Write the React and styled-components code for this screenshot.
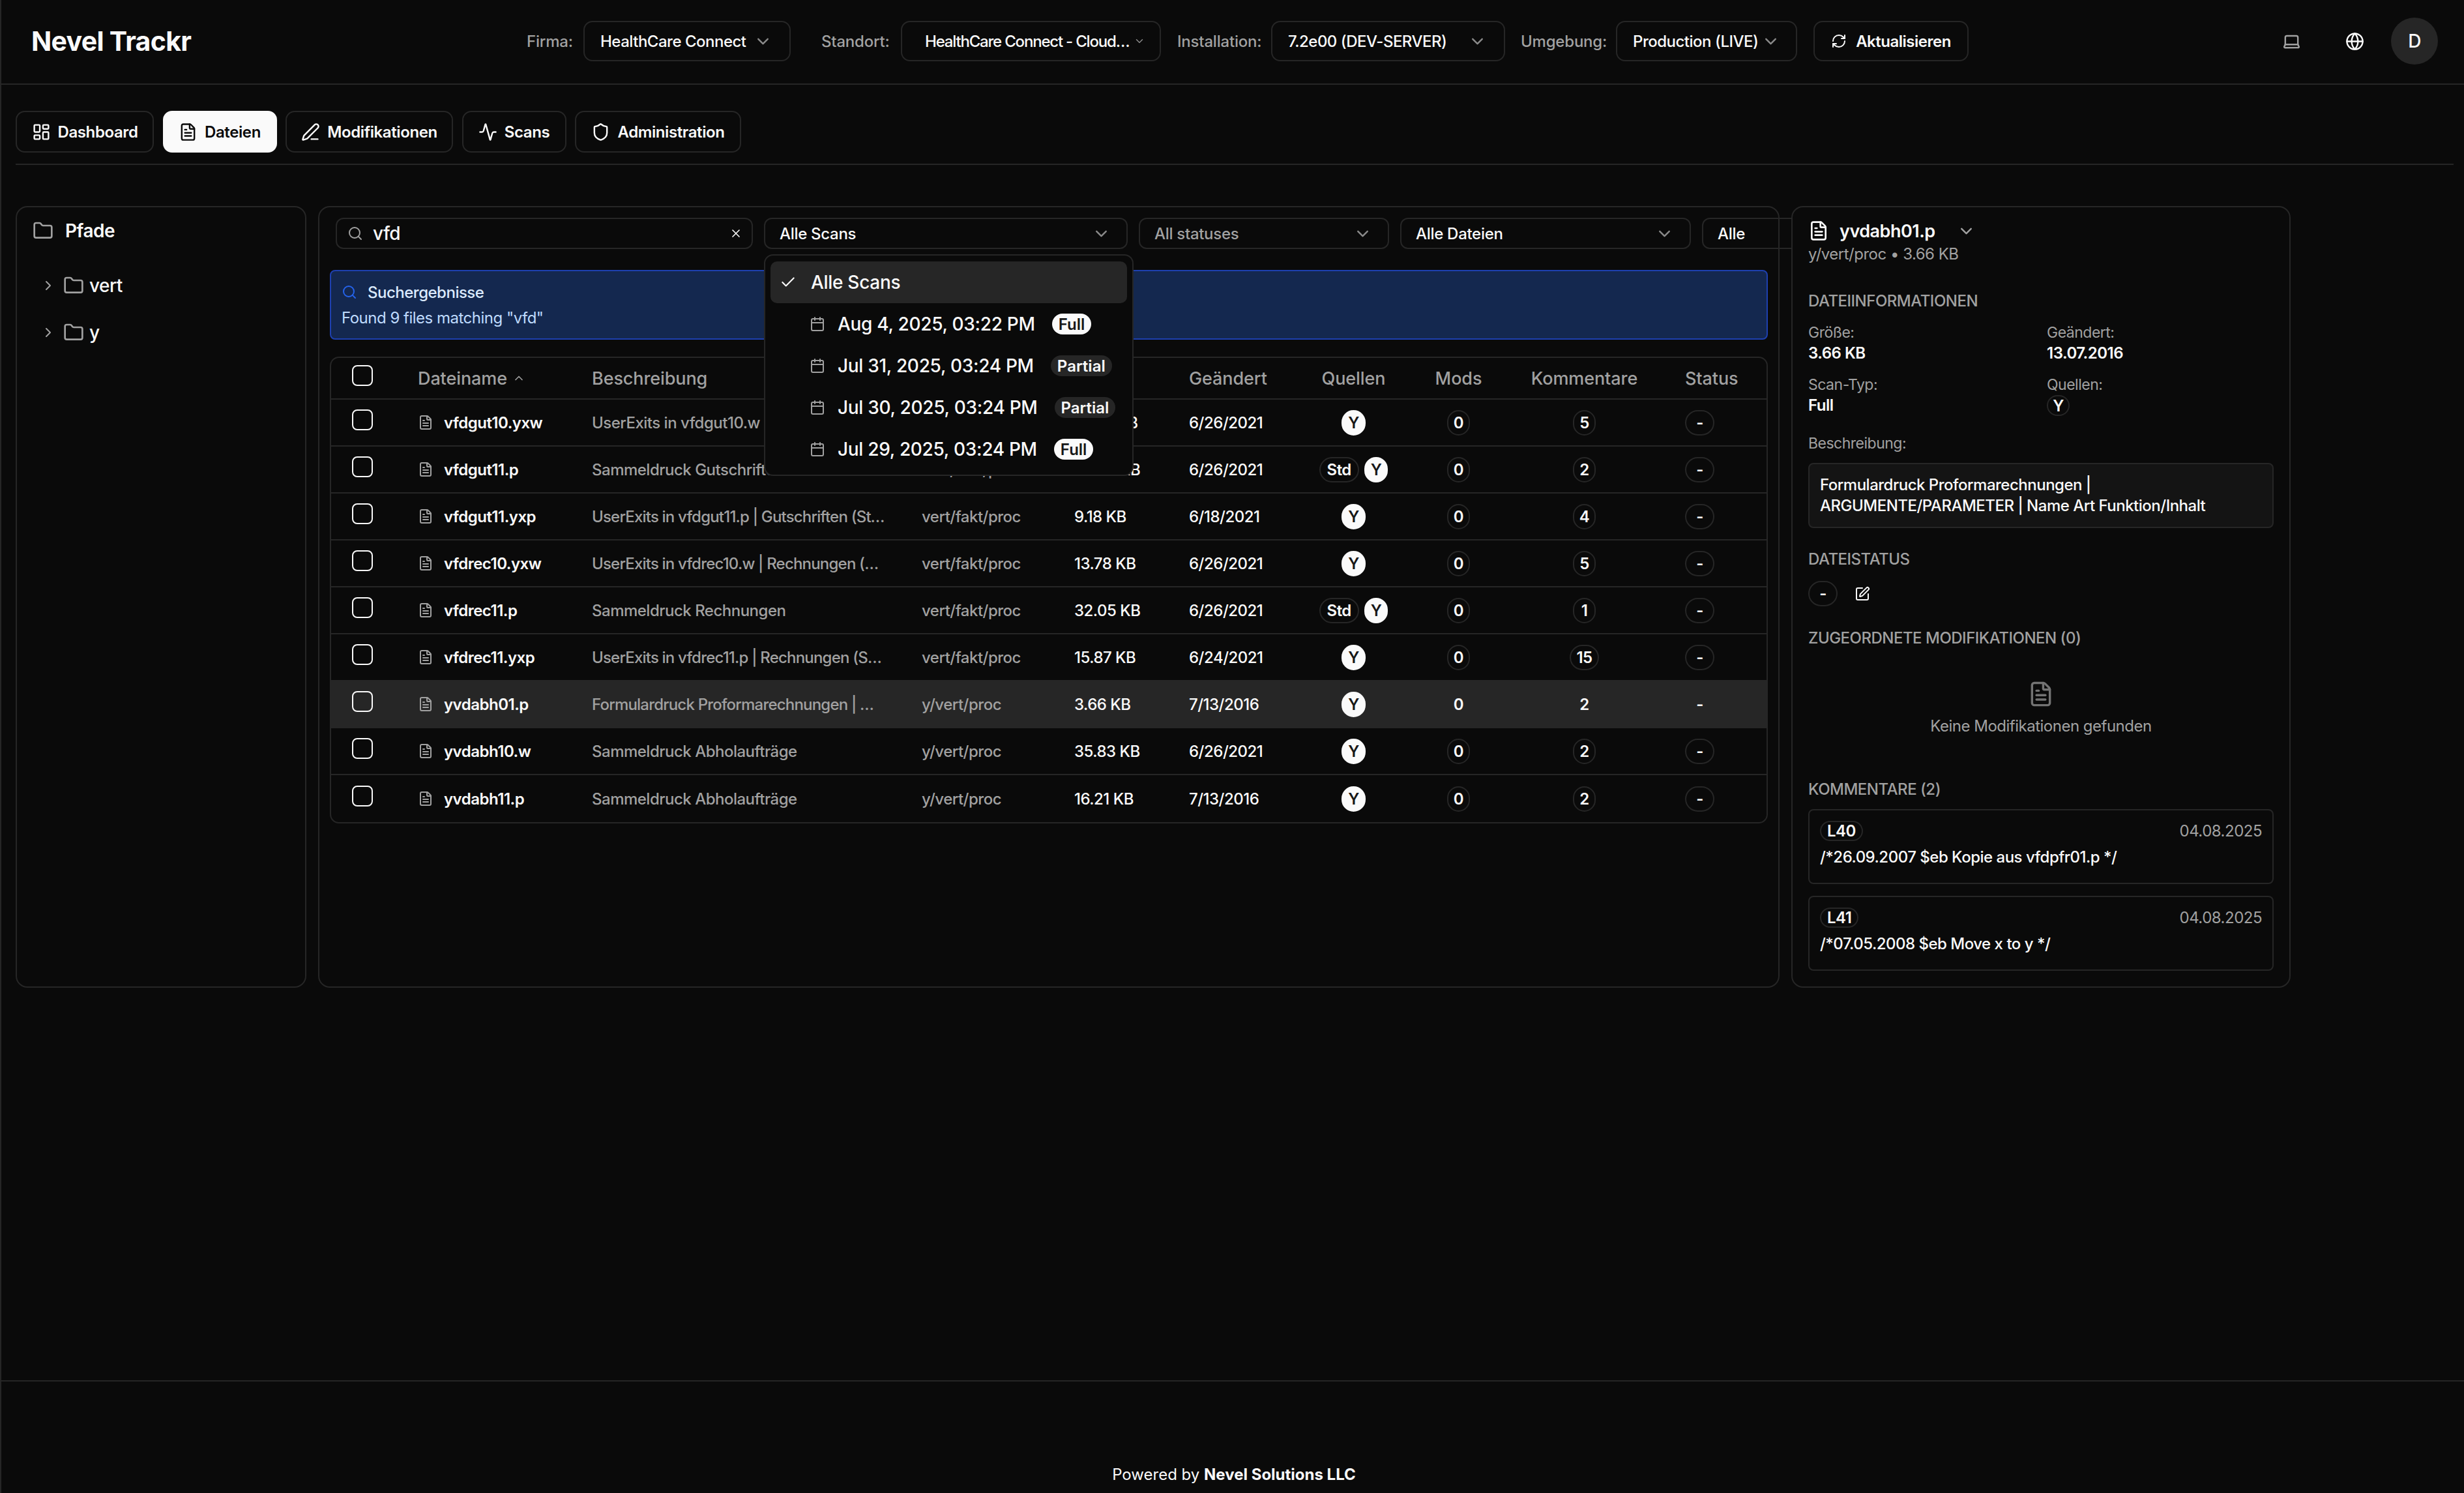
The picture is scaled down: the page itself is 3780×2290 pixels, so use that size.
import React from "react";
import styled, { createGlobalStyle } from "styled-components";
import {
  Activity,
  Calendar,
  Check,
  ChevronDown,
  ChevronRight,
  ChevronUp,
  FileText,
  Folder,
  Globe,
  Laptop,
  LayoutDashboard,
  PenLine,
  RefreshCw,
  Search,
  Shield,
  SquarePen,
  X,
} from "lucide-react";

const GlobalStyle = createGlobalStyle`
  html, body {
    margin: 0;
    padding: 0;
    background: #0a0a0a;
  }
  * {
    box-sizing: border-box;
  }
  body {
    font-family: Inter, "Liberation Sans", sans-serif;
    color: #fafafa;
    letter-spacing: -0.5px;
  }
`;

const Page = styled.div`
  min-height: 2290px;
  display: flex;
  flex-direction: column;
  background: #0a0a0a;
  box-shadow: inset 2px 0 0 #262626;
`;

/* header */
const Header = styled.header`
  height: 130px;
  flex: none;
  display: flex;
  align-items: center;
  padding: 0 40px 2px 48px;
  border-bottom: 2px solid #262626;
`;

const Logo = styled.div`
  font-size: 41px;
  font-weight: 700;
  letter-spacing: -0.7px;
  width: 760px;
  flex: none;
`;

const Controls = styled.div`
  display: flex;
  align-items: center;
`;

const FieldLabel = styled.span`
  font-size: 24px;
  font-weight: 500;
  color: #a1a1a1;
  letter-spacing: -0.2px;
  width: ${(p) => p.$width}px;
  flex: none;
`;

const HeaderSelect = styled.div`
  height: 62px;
  width: ${(p) => p.$width}px;
  flex: none;
  margin-right: ${(p) => p.$after || 0}px;
  border: 2px solid #262626;
  border-radius: 14px;
  padding: 0 ${(p) => p.$right || 24}px 0 ${(p) => p.$left || 24}px;
  display: flex;
  align-items: center;
  justify-content: space-between;
  font-size: 24px;
  font-weight: 500;
  white-space: nowrap;
  svg {
    color: #8a8a8a;
    flex: none;
  }
`;

const SelectText = styled.span`
  overflow: hidden;
  text-overflow: ellipsis;
  letter-spacing: ${(p) => (p.$tight ? "-1.2px" : "inherit")};
`;

const RefreshButton = styled.div`
  height: 62px;
  width: 238px;
  flex: none;
  border: 2px solid #262626;
  border-radius: 14px;
  display: flex;
  align-items: center;
  justify-content: center;
  gap: 14px;
  font-size: 24px;
  font-weight: 600;
`;

const HeaderRight = styled.div`
  margin-left: auto;
  display: flex;
  align-items: center;
`;

const IconButton = styled.div`
  width: 72px;
  height: 72px;
  margin-right: ${(p) => p.$after || 0}px;
  display: flex;
  align-items: center;
  justify-content: center;
`;

const Avatar = styled.div`
  width: 72px;
  height: 72px;
  border-radius: 50%;
  background: #262626;
  display: flex;
  align-items: center;
  justify-content: center;
  font-size: 28px;
  font-weight: 500;
`;

/* main */
const Main = styled.main`
  flex: 1;
  padding: 40px 16px 0 24px;
`;

const Tabs = styled.nav`
  display: flex;
  gap: 13.5px;
  padding-bottom: 17px;
  border-bottom: 2px solid #262626;
`;

const Tab = styled.div`
  height: 64px;
  width: ${(p) => p.$width}px;
  border-radius: 14px;
  border: 2px solid ${(p) => (p.$active ? "#fafafa" : "#262626")};
  background: ${(p) => (p.$active ? "#fafafa" : "transparent")};
  color: ${(p) => (p.$active ? "#0a0a0a" : "#fafafa")};
  display: flex;
  align-items: center;
  justify-content: center;
  gap: 11px;
  font-size: 24px;
  font-weight: 600;
  letter-spacing: -0.4px;
`;

const Columns = styled.div`
  margin-top: 63px;
  display: grid;
  grid-template-columns: 446px 2242px 766px;
  column-gap: 18px;
  height: 1199px;
`;

const Panel = styled.section`
  border: 2px solid #262626;
  border-radius: 18px;
  background: #0a0a0a;
  position: relative;
`;

/* paths */
const PathsPanel = styled(Panel)`
  padding: 20px 24px;
`;

const PathsTitle = styled.div`
  display: flex;
  align-items: center;
  gap: 18px;
  font-size: 28px;
  font-weight: 600;
  height: 32px;
  margin-bottom: 32px;
`;

const TreeRow = styled.div`
  height: 72px;
  padding-left: 12px;
  display: flex;
  align-items: center;
  font-size: 28px;
  font-weight: 500;
  svg {
    color: #a1a1a1;
    flex: none;
  }
`;

const TreeName = styled.span`
  margin-left: 8px;
`;

const TreeFolder = styled(Folder)`
  margin-left: 11px;
`;

/* files */
const FilesPanel = styled(Panel)`
  padding: 16px 16px 0;
`;

const FilterRow = styled.div`
  display: flex;
  gap: 17px;
  padding-left: 9px;
`;

const SearchBox = styled.div`
  width: 640px;
  height: 48px;
  flex: none;
  border: 2px solid #262626;
  border-radius: 12px;
  padding: 0 14px 0 16px;
  display: flex;
  align-items: center;
  gap: 15px;
  font-size: 28px;
  font-weight: 500;
  svg {
    color: #a1a1a1;
    flex: none;
  }
`;

const SearchValue = styled.span`
  flex: 1;
`;

const FilterSelect = styled.div`
  position: relative;
  width: ${(p) => p.$width}px;
  height: 48px;
  flex: none;
  border: 2px solid #262626;
  border-radius: 12px;
  padding: 0 24px 0 22px;
  display: flex;
  align-items: center;
  justify-content: space-between;
  font-size: 24px;
  font-weight: 500;
  letter-spacing: -0.3px;
  color: ${(p) => (p.$muted ? "#a1a1a1" : "#fafafa")};
  > svg {
    color: #8a8a8a;
    flex: none;
  }
`;

const Dropdown = styled.div`
  position: absolute;
  top: 54px;
  left: -2px;
  width: 567px;
  height: 340px;
  z-index: 5;
  padding: 9px 8px;
  background: #0a0a0a;
  border: 2px solid #262626;
  border-radius: 14px;
`;

const Option = styled.div`
  height: 64px;
  border-radius: 10px;
  background: ${(p) => (p.$selected ? "#262626" : "transparent")};
  display: flex;
  align-items: center;
  padding-left: 14px;
  font-size: 28px;
  font-weight: 500;
  color: #fafafa;
`;

const OptionLabel = styled.span`
  margin-left: 22px;
  white-space: nowrap;
`;

const OptionDate = styled.span`
  margin-left: 19px;
  margin-right: 26px;
  white-space: nowrap;
`;

const OptionIcon = styled.span`
  margin-left: 46px;
  display: flex;
  color: #a1a1a1;
`;

const ScanBadge = styled.span`
  height: 32px;
  padding: 0 10px;
  border-radius: 16px;
  display: flex;
  align-items: center;
  font-size: 24px;
  font-weight: 600;
  letter-spacing: 0;
  background: ${(p) => (p.$full ? "#fafafa" : "#262626")};
  color: ${(p) => (p.$full ? "#171717" : "#fafafa")};
`;

const Banner = styled.div`
  margin-top: 32px;
  height: 107px;
  background: #14284f;
  border: 2px solid #1e40af;
  border-radius: 8px;
  padding: 16px 16px;
`;

const BannerTitle = styled.div`
  display: flex;
  align-items: center;
  gap: 16px;
  font-size: 24px;
  font-weight: 500;
  color: #dbeafe;
  height: 32px;
  svg {
    color: #2563eb;
  }
`;

const BannerText = styled.div`
  margin-top: 8px;
  font-size: 24px;
  color: #bfdbfe;
  height: 32px;
  line-height: 32px;
`;

const TableWrap = styled.div`
  margin-top: 26px;
  border: 2px solid #262626;
  border-radius: 14px;
  overflow: hidden;
`;

const gridColumns = "101px 267px 506px 234px 176px 178px 149px 173px 213px 1fr";

const HeadRow = styled.div`
  height: 64px;
  padding-left: 32px;
  display: grid;
  grid-template-columns: ${gridColumns};
  align-items: center;
  border-bottom: 2px solid #262626;
  font-size: 27px;
  font-weight: 500;
  letter-spacing: -0.1px;
  color: #a1a1a1;
`;

const Row = styled.div`
  height: 72px;
  padding-left: 32px;
  display: grid;
  grid-template-columns: ${gridColumns};
  align-items: center;
  background: ${(p) => (p.$selected ? "#262626" : "transparent")};
  border-bottom: ${(p) => (p.$last ? "none" : "2px solid #262626")};
  font-size: 24px;
  font-weight: 500;
`;

const Checkbox = styled.span`
  display: block;
  width: 32px;
  height: 32px;
  border: 2px solid #fafafa;
  border-radius: 8px;
  margin-top: -8px;
`;

const HeadCell = styled.div`
  display: flex;
  align-items: center;
  gap: 8px;
  justify-content: ${(p) => (p.$center ? "center" : "flex-start")};
  padding-left: ${(p) => p.$pad || 0}px;
  svg {
    color: #a1a1a1;
  }
`;

const NameCell = styled.div`
  display: flex;
  align-items: center;
  gap: 16px;
  font-weight: 600;
  svg {
    color: #a1a1a1;
    flex: none;
  }
`;

const MutedCell = styled.div`
  color: #a1a1a1;
  width: ${(p) => p.$width || 450}px;
  letter-spacing: ${(p) => (p.$tight ? "-0.8px" : "inherit")};
  white-space: nowrap;
  overflow: hidden;
  text-overflow: ellipsis;
`;

const BadgeCell = styled.div`
  display: flex;
  align-items: center;
  gap: 8px;
  justify-content: ${(p) => (p.$start ? "flex-start" : "center")};
  padding-left: ${(p) => p.$pad || 0}px;
`;

const Badge = styled.span`
  display: inline-flex;
  align-items: center;
  justify-content: center;
  height: ${(p) => p.$height || 39}px;
  min-width: ${(p) => p.$min || 35}px;
  padding: 0 ${(p) => p.$px || 8}px;
  border-radius: 20px;
  border: 2px solid ${(p) => (p.$filled ? "#fafafa" : p.$plain ? "transparent" : "#262626")};
  background: ${(p) => (p.$filled ? "#fafafa" : "transparent")};
  color: ${(p) => (p.$filled ? "#171717" : "#fafafa")};
  font-size: 24px;
  font-weight: 600;
`;

/* detail */
const DetailPanel = styled(Panel)`
  padding: 18px 24px;
  z-index: 2;
`;

const DetailHead = styled.div`
  display: flex;
  align-items: center;
  height: 36px;
  font-size: 27px;
  font-weight: 600;
`;

const DetailName = styled.span`
  margin-left: 16px;
  margin-right: 33px;
`;

const DetailSub = styled.div`
  font-size: 24px;
  color: #a1a1a1;
  height: 34px;
  line-height: 34px;
  margin-top: 1px;
`;

const SectionTitle = styled.div`
  font-size: 24px;
  font-weight: 500;
  color: #a1a1a1;
  text-transform: uppercase;
  height: 30px;
  line-height: 30px;
  margin-top: ${(p) => p.$top || 0}px;
`;

const InfoGrid = styled.div`
  margin-top: 17px;
  display: grid;
  grid-template-columns: 366px 1fr;
  row-gap: 16px;
`;

const InfoItem = styled.div`
  display: flex;
  flex-direction: column;
`;

const InfoLabel = styled.span`
  font-size: 23px;
  color: #a1a1a1;
  height: 32px;
  line-height: 32px;
`;

const InfoValue = styled.span`
  font-size: 24px;
  font-weight: 600;
  height: 32px;
  line-height: 32px;
`;

const DescLabel = styled(InfoLabel)`
  display: block;
  margin-top: 26px;
`;

const DescBox = styled.div`
  margin-top: 14px;
  height: 100px;
  padding: 16px;
  background: #141414;
  border: 2px solid #262626;
  border-radius: 8px;
  font-size: 24px;
  font-weight: 500;
  line-height: 32px;
`;

const StatusRow = styled.div`
  margin-top: 18px;
  display: flex;
  align-items: center;
  gap: 26px;
`;

const EmptyState = styled.div`
  margin-top: 50px;
  height: 84px;
  display: flex;
  flex-direction: column;
  align-items: center;
  color: #a1a1a1;
  font-size: 24px;
  svg {
    color: #737373;
    margin-bottom: 14px;
  }
`;

const CommentCard = styled.div`
  margin-top: ${(p) => p.$top}px;
  height: 115px;
  border: 2px solid #262626;
  border-radius: 8px;
  padding: 16px;
`;

const CommentTop = styled.div`
  display: flex;
  align-items: center;
  justify-content: space-between;
`;

const CommentDate = styled.span`
  font-size: 24px;
  color: #a1a1a1;
`;

const CommentText = styled.div`
  margin-top: 9px;
  font-size: 24px;
  font-weight: 500;
  line-height: 32px;
`;

/* footer */
const Footer = styled.footer`
  height: 173px;
  flex: none;
  border-top: 2px solid #262626;
  display: flex;
  align-items: flex-end;
  justify-content: center;
  padding: 0 0 14px 6px;
  font-size: 24px;
  letter-spacing: 0;
  b {
    font-weight: 700;
  }
`;

const scans = [
  { date: "Aug 4, 2025, 03:22 PM", type: "Full" },
  { date: "Jul 31, 2025, 03:24 PM", type: "Partial" },
  { date: "Jul 30, 2025, 03:24 PM", type: "Partial" },
  { date: "Jul 29, 2025, 03:24 PM", type: "Full" },
];

const files = [
  { name: "vfdgut10.yxw", desc: "UserExits in vfdgut10.w", path: "vert/fakt/proc", size: "12.43 KB", date: "6/26/2021", comments: 5 },
  { name: "vfdgut11.p", desc: "Sammeldruck Gutschriften", path: "vert/fakt/proc", size: "30.85 KB", date: "6/26/2021", std: true, comments: 2 },
  { name: "vfdgut11.yxp", desc: "UserExits in vfdgut11.p | Gutschriften (Storno)", path: "vert/fakt/proc", size: "9.18 KB", date: "6/18/2021", comments: 4, tight: true },
  { name: "vfdrec10.yxw", desc: "UserExits in vfdrec10.w | Rechnungen (Storno)", path: "vert/fakt/proc", size: "13.78 KB", date: "6/26/2021", comments: 5, tight: true },
  { name: "vfdrec11.p", desc: "Sammeldruck Rechnungen", path: "vert/fakt/proc", size: "32.05 KB", date: "6/26/2021", std: true, comments: 1 },
  { name: "vfdrec11.yxp", desc: "UserExits in vfdrec11.p | Rechnungen (Storno)", path: "vert/fakt/proc", size: "15.87 KB", date: "6/24/2021", comments: 15, tight: true },
  { name: "yvdabh01.p", desc: "Formulardruck Proformarechnungen | …", path: "y/vert/proc", size: "3.66 KB", date: "7/13/2016", comments: 2, selected: true, tight: true },
  { name: "yvdabh10.w", desc: "Sammeldruck Abholaufträge", path: "y/vert/proc", size: "35.83 KB", date: "6/26/2021", comments: 2 },
  { name: "yvdabh11.p", desc: "Sammeldruck Abholaufträge", path: "y/vert/proc", size: "16.21 KB", date: "7/13/2016", comments: 2 },
];

const comments = [
  { line: "L40", text: "/*26.09.2007 $eb Kopie aus vfdpfr01.p */", top: 15 },
  { line: "L41", text: "/*07.05.2008 $eb Move x to y */", top: 18 },
];

function FileRow({ file, last }) {
  return (
    <Row $selected={file.selected} $last={last}>
      <Checkbox />
      <NameCell>
        <FileText size={24} />
        {file.name}
      </NameCell>
      <MutedCell $tight={file.tight}>{file.desc}</MutedCell>
      <MutedCell $width={220}>{file.path}</MutedCell>
      <div>{file.size}</div>
      <div>{file.date}</div>
      <BadgeCell>
        {file.std && <Badge $px={10}>Std</Badge>}
        <Badge $filled>Y</Badge>
      </BadgeCell>
      <BadgeCell>
        <Badge $plain={file.selected}>0</Badge>
      </BadgeCell>
      <BadgeCell>
        <Badge $plain={file.selected}>{file.comments}</Badge>
      </BadgeCell>
      <BadgeCell $start $pad={48}>
        <Badge $plain={file.selected} $min={45}>-</Badge>
      </BadgeCell>
    </Row>
  );
}

export default function App() {
  return (
    <>
      <GlobalStyle />
      <Page>
        <Header>
          <Logo>Nevel Trackr</Logo>
          <Controls>
            <FieldLabel $width={87}>Firma:</FieldLabel>
            <HeaderSelect $width={318} $after={47} $right={26}>
              <SelectText>HealthCare Connect</SelectText>
              <ChevronDown size={29} />
            </HeaderSelect>
            <FieldLabel $width={122}>Standort:</FieldLabel>
            <HeaderSelect $width={399} $after={25} $left={35} $right={22}>
              <SelectText $tight>HealthCare Connect - Cloudservices</SelectText>
              <ChevronDown size={18} />
            </HeaderSelect>
            <FieldLabel $width={144}>Installation:</FieldLabel>
            <HeaderSelect $width={359} $after={24} $right={26}>
              <SelectText>7.2e00 (DEV-SERVER)</SelectText>
              <ChevronDown size={29} />
            </HeaderSelect>
            <FieldLabel $width={146}>Umgebung:</FieldLabel>
            <HeaderSelect $width={278} $after={25} $right={24}>
              <SelectText>Production (LIVE)</SelectText>
              <ChevronDown size={29} />
            </HeaderSelect>
            <RefreshButton>
              <RefreshCw size={24} />
              Aktualisieren
            </RefreshButton>
          </Controls>
          <HeaderRight>
            <IconButton $after={25}>
              <Laptop size={29} color="#a1a1a1" />
            </IconButton>
            <IconButton $after={20}>
              <Globe size={29} />
            </IconButton>
            <Avatar>D</Avatar>
          </HeaderRight>
        </Header>

        <Main>
          <Tabs>
            <Tab $width={212}>
              <LayoutDashboard size={29} />
              Dashboard
            </Tab>
            <Tab $width={175} $active>
              <FileText size={29} />
              Dateien
            </Tab>
            <Tab $width={257}>
              <PenLine size={29} />
              Modifikationen
            </Tab>
            <Tab $width={160}>
              <Activity size={29} />
              Scans
            </Tab>
            <Tab $width={255}>
              <Shield size={29} />
              Administration
            </Tab>
          </Tabs>

          <Columns>
            <PathsPanel>
              <PathsTitle>
                <Folder size={32} color="#a1a1a1" />
                Pfade
              </PathsTitle>
              <TreeRow>
                <ChevronRight size={24} />
                <TreeFolder size={32} />
                <TreeName>vert</TreeName>
              </TreeRow>
              <TreeRow>
                <ChevronRight size={24} />
                <TreeFolder size={32} />
                <TreeName>y</TreeName>
              </TreeRow>
            </PathsPanel>

            <FilesPanel>
              <FilterRow>
                <SearchBox>
                  <Search size={24} />
                  <SearchValue>vfd</SearchValue>
                  <X size={20} color="#fafafa" />
                </SearchBox>
                <FilterSelect $width={558}>
                  Alle Scans
                  <ChevronDown size={29} />
                  <Dropdown>
                    <Option $selected>
                      <Check size={26} />
                      <OptionLabel>Alle Scans</OptionLabel>
                    </Option>
                    {scans.map((s) => (
                      <Option key={s.date}>
                        <OptionIcon>
                          <Calendar size={24} />
                        </OptionIcon>
                        <OptionDate>{s.date}</OptionDate>
                        <ScanBadge $full={s.type === "Full"}>{s.type}</ScanBadge>
                      </Option>
                    ))}
                  </Dropdown>
                </FilterSelect>
                <FilterSelect $width={384} $muted>
                  All statuses
                  <ChevronDown size={29} />
                </FilterSelect>
                <FilterSelect $width={446}>
                  Alle Dateien
                  <ChevronDown size={29} />
                </FilterSelect>
                <FilterSelect $width={200}>Alle</FilterSelect>
              </FilterRow>

              <Banner>
                <BannerTitle>
                  <Search size={24} />
                  Suchergebnisse
                </BannerTitle>
                <BannerText>Found 9 files matching "vfd"</BannerText>
              </Banner>

              <TableWrap>
                <HeadRow>
                  <Checkbox />
                  <HeadCell>
                    Dateiname
                    <ChevronUp size={20} />
                  </HeadCell>
                  <HeadCell>Beschreibung</HeadCell>
                  <HeadCell>Pfad</HeadCell>
                  <HeadCell>Größe</HeadCell>
                  <HeadCell>Geändert</HeadCell>
                  <HeadCell $center>Quellen</HeadCell>
                  <HeadCell $center>Mods</HeadCell>
                  <HeadCell $center>Kommentare</HeadCell>
                  <HeadCell $pad={48}>Status</HeadCell>
                </HeadRow>
                {files.map((f, i) => (
                  <FileRow key={f.name} file={f} last={i === files.length - 1} />
                ))}
              </TableWrap>
            </FilesPanel>

            <DetailPanel>
              <DetailHead>
                <FileText size={32} />
                <DetailName>yvdabh01.p</DetailName>
                <ChevronDown size={29} color="#a1a1a1" />
              </DetailHead>
              <DetailSub>y/vert/proc • 3.66 KB</DetailSub>

              <SectionTitle $top={40}>Dateiinformationen</SectionTitle>
              <InfoGrid>
                <InfoItem>
                  <InfoLabel>Größe:</InfoLabel>
                  <InfoValue>3.66 KB</InfoValue>
                </InfoItem>
                <InfoItem>
                  <InfoLabel>Geändert:</InfoLabel>
                  <InfoValue>13.07.2016</InfoValue>
                </InfoItem>
                <InfoItem>
                  <InfoLabel>Scan-Typ:</InfoLabel>
                  <InfoValue>Full</InfoValue>
                </InfoItem>
                <InfoItem>
                  <InfoLabel>Quellen:</InfoLabel>
                  <div>
                    <Badge $height={32} $px={6}>Y</Badge>
                  </div>
                </InfoItem>
              </InfoGrid>
              <DescLabel>Beschreibung:</DescLabel>
              <DescBox>
                Formulardruck Proformarechnungen |
                <br />
                ARGUMENTE/PARAMETER | Name Art Funktion/Inhalt
              </DescBox>

              <SectionTitle $top={33}>Dateistatus</SectionTitle>
              <StatusRow>
                <Badge $min={45}>-</Badge>
                <SquarePen size={24} />
              </StatusRow>

              <SectionTitle $top={34}>Zugeordnete Modifikationen (0)</SectionTitle>
              <EmptyState>
                <FileText size={48} />
                Keine Modifikationen gefunden
              </EmptyState>

              <SectionTitle $top={68}>Kommentare (2)</SectionTitle>
              {comments.map((c) => (
                <CommentCard key={c.line} $top={c.top}>
                  <CommentTop>
                    <Badge $height={31} $px={9}>{c.line}</Badge>
                    <CommentDate>04.08.2025</CommentDate>
                  </CommentTop>
                  <CommentText>{c.text}</CommentText>
                </CommentCard>
              ))}
            </DetailPanel>
          </Columns>
        </Main>

        <Footer>
          <span>
            Powered by <b>Nevel Solutions LLC</b>
          </span>
        </Footer>
      </Page>
    </>
  );
}
